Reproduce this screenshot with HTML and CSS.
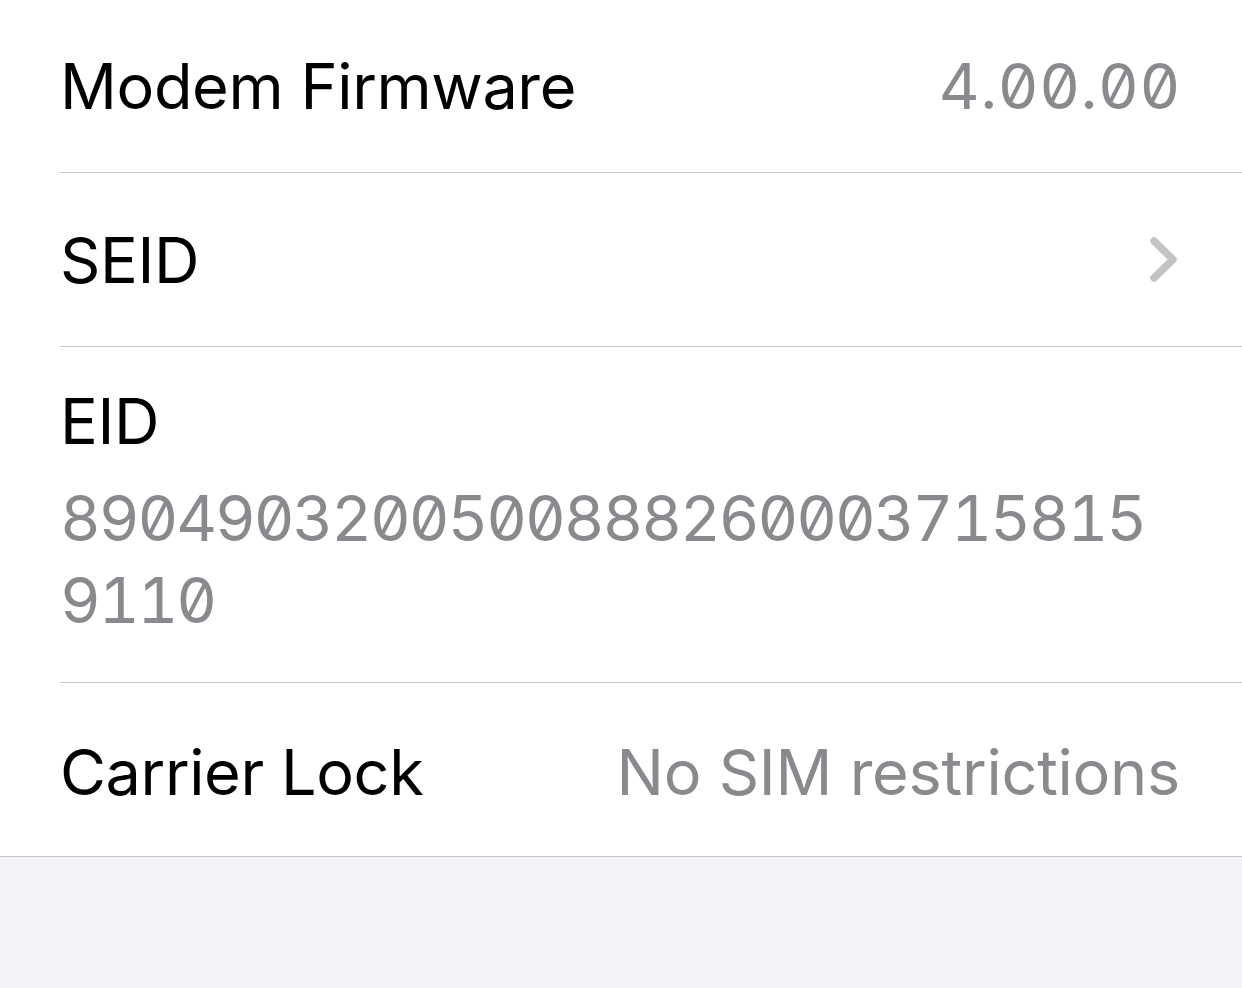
FILE: index.html
```html
<!DOCTYPE html>
<html lang="en">
<head>
    <meta charset="UTF-8">
    <meta name="viewport" content="width=device-width, initial-scale=1.0">
    <title>About</title>
    <link rel="stylesheet" href="styles.css">
</head>
<body>
    <div class="list">
        <div class="row row-first">
            <span class="label">Modem Firmware</span>
            <span class="value digits version">4.00.00</span>
        </div>
        <div class="row">
            <span class="label">SEID</span>
            <svg class="chevron" width="27" height="45" viewBox="0 0 27 45">
                <path d="M4 4 L23 22.5 L4 41" fill="none" stroke="#c4c4c7" stroke-width="7.5" stroke-linecap="round" stroke-linejoin="round"/>
            </svg>
        </div>
        <div class="row row-stacked">
            <span class="label">EID</span>
            <span class="value digits eid">89049032005008882600037158159110</span>
        </div>
        <div class="row row-last">
            <span class="label">Carrier Lock</span>
            <span class="value">No SIM restrictions</span>
        </div>
    </div>
    <div class="footer"></div>
</body>
</html>
```

FILE: styles.css
```css
body {
    margin: 0;
    padding: 0;
    background-color: #f2f2f7;
    font-family: Inter, "Liberation Sans", sans-serif;
    height: 988px;
    overflow: hidden;
}
.list {
    background: #ffffff;
    border-bottom: 1px solid #c6c6c8;
}
.row {
    display: flex;
    justify-content: space-between;
    align-items: center;
    height: 174px;
    margin-left: 60px;
    padding-right: 62px;
    border-bottom: 1px solid #c6c6c8;
    box-sizing: border-box;
}
.row-first {
    height: 173px;
}
.row-last {
    border-bottom: none;
    height: 173px;
    padding-top: 5px;
}
.label {
    font-size: 63px;
    color: #000000;
    letter-spacing: -0.4px;
}
.value {
    font-size: 63px;
    color: #8a8a8e;
    letter-spacing: -0.25px;
}
.digits {
    font-feature-settings: "tnum", "zero";
}
.version {
    letter-spacing: 0.6px;
    margin-right: -1px;
}
.row-stacked {
    flex-direction: column;
    align-items: flex-start;
    justify-content: flex-start;
    height: 336px;
    padding-top: 34px;
}
.row-stacked .label {
    line-height: 80px;
}
.eid {
    display: block;
    max-width: 1100px;
    word-break: break-all;
    line-height: 82px;
    letter-spacing: -2.1px;
    margin-top: 16px;
}
.chevron {
    display: block;
    margin-right: 3px;
}
.footer {
    height: 131px;
}
```
